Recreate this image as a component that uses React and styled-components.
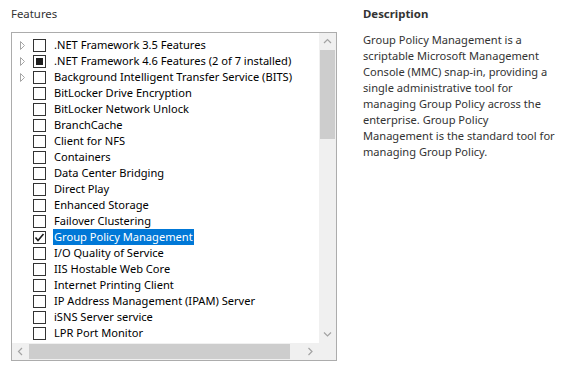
import React from "react";
import styled, { createGlobalStyle } from "styled-components";

const GlobalStyle = createGlobalStyle`
	html, body {
		margin: 0;
		padding: 0;
		background: #ffffff;
	}
	body {
		font-family: "Noto Sans", "Open Sans", sans-serif;
		font-size: 11.1px;
		color: #1a1a1a;
	}
`;

const Page = styled.div`
	display: flex;
	gap: 26px;
	padding: 6px 0 0 11px;
	width: 569px;
	height: 368px;
	box-sizing: border-box;
`;

const Column = styled.div`
	display: flex;
	flex-direction: column;
	width: ${(p) => p.width}px;
`;

const Heading = styled.div`
	height: 16px;
	line-height: 16px;
	font-size: 11.4px;
	font-weight: ${(p) => (p.bold ? 700 : 400)};
	color: #333333;
	margin-bottom: ${(p) => p.gap}px;
`;

const ListBox = styled.div`
	display: grid;
	grid-template-columns: 1fr 17px;
	grid-template-rows: 1fr 17px;
	width: 326px;
	height: 329px;
	box-sizing: border-box;
	border: 1px solid #acacac;
`;

const Viewport = styled.div`
	overflow: hidden;
	padding-top: 4px;
`;

const Row = styled.div`
	display: flex;
	align-items: center;
	height: 16px;
	padding-left: 8px;
	white-space: nowrap;
`;

const Expander = styled.span`
	display: flex;
	align-items: center;
	width: 13px;
	height: 16px;
	flex: none;
`;

const Box = styled.span`
	display: flex;
	align-items: center;
	justify-content: center;
	width: 13px;
	height: 13px;
	box-sizing: border-box;
	border: 1px solid #333333;
	flex: none;
	margin-right: 7px;
`;

const Partial = styled.span`
	width: 7px;
	height: 7px;
	background: #1e1e1e;
`;

const Label = styled.span`
	padding: 0 1px;
	line-height: 16px;
	color: ${(p) => (p.selected ? "#ffffff" : "#000000")};
	background: ${(p) => (p.selected ? "#0078d7" : "transparent")};
`;

const VScroll = styled.div`
	display: flex;
	flex-direction: column;
	background: #f0f0f0;
`;

const HScroll = styled.div`
	display: flex;
	background: #f0f0f0;
`;

const Arrow = styled.span`
	display: flex;
	align-items: center;
	justify-content: center;
	width: 17px;
	height: 17px;
	flex: none;
`;

const VThumb = styled.div`
	height: 89px;
	margin: 0 1px;
	background: #cdcdcd;
`;

const HThumb = styled.div`
	width: 261px;
	margin: 1px 0;
	background: #cdcdcd;
`;

const Spacer = styled.div`
	flex: 1;
`;

const Corner = styled.div`
	background: #f0f0f0;
`;

const Paragraph = styled.div`
	color: #333333;
	line-height: 16px;
	margin-top: 2px;
`;

const Line = styled.div`
	white-space: nowrap;
`;

const features = [
	{ name: ".NET Framework 3.5 Features", expand: true },
	{ name: ".NET Framework 4.6 Features (2 of 7 installed)", expand: true, state: "partial" },
	{ name: "Background Intelligent Transfer Service (BITS)", expand: true },
	{ name: "BitLocker Drive Encryption" },
	{ name: "BitLocker Network Unlock" },
	{ name: "BranchCache" },
	{ name: "Client for NFS" },
	{ name: "Containers" },
	{ name: "Data Center Bridging" },
	{ name: "Direct Play" },
	{ name: "Enhanced Storage" },
	{ name: "Failover Clustering" },
	{ name: "Group Policy Management", state: "checked", selected: true },
	{ name: "I/O Quality of Service" },
	{ name: "IIS Hostable Web Core" },
	{ name: "Internet Printing Client" },
	{ name: "IP Address Management (IPAM) Server" },
	{ name: "iSNS Server service" },
	{ name: "LPR Port Monitor" },
];

const description = [
	"Group Policy Management is a",
	"scriptable Microsoft Management",
	"Console (MMC) snap-in, providing a",
	"single administrative tool for",
	"managing Group Policy across the",
	"enterprise. Group Policy",
	"Management is the standard tool for",
	"managing Group Policy.",
];

const Triangle = () => (
	<svg width="5" height="9" viewBox="0 0 5 9">
		<path d="M0.5 0.5 L4.5 4.5 L0.5 8.5 Z" fill="none" stroke="#a6a6a6" strokeWidth="1" />
	</svg>
);

const Check = () => (
	<svg width="11" height="11" viewBox="0 0 11 11">
		<polyline points="1.5,5.5 4,8.5 9.5,2" fill="none" stroke="#1a1a1a" strokeWidth="1.6" />
	</svg>
);

const Chevron = ({ dir }) => {
	const pts = {
		up: "1,5 4.5,1.5 8,5",
		down: "1,1.5 4.5,5 8,1.5",
		left: "5,1 1.5,4.5 5,8",
		right: "1.5,1 5,4.5 1.5,8",
	}[dir];
	const vertical = dir === "up" || dir === "down";
	return (
		<svg width={vertical ? 9 : 7} height={vertical ? 7 : 9} viewBox={vertical ? "0 0 9 7" : "0 0 7 9"}>
			<polyline points={pts} fill="none" stroke="#a3a3a3" strokeWidth="1.2" />
		</svg>
	);
};

const App = () => {
	return (
		<>
			<GlobalStyle />
			<Page>
				<Column width={326}>
					<Heading gap={10}>Features</Heading>
					<ListBox>
						<Viewport>
							{features.map((f) => (
								<Row key={f.name}>
									<Expander>{f.expand && <Triangle />}</Expander>
									<Box>
										{f.state === "partial" && <Partial />}
										{f.state === "checked" && <Check />}
									</Box>
									<Label selected={f.selected}>{f.name}</Label>
								</Row>
							))}
						</Viewport>
						<VScroll>
							<Arrow>
								<Chevron dir="up" />
							</Arrow>
							<VThumb />
							<Spacer />
							<Arrow>
								<Chevron dir="down" />
							</Arrow>
						</VScroll>
						<HScroll>
							<Arrow>
								<Chevron dir="left" />
							</Arrow>
							<HThumb />
							<Spacer />
							<Arrow>
								<Chevron dir="right" />
							</Arrow>
						</HScroll>
						<Corner />
					</ListBox>
				</Column>
				<Column width={210}>
					<Heading bold gap={8}>Description</Heading>
					<Paragraph>
						{description.map((l) => (
							<Line key={l}>{l}</Line>
						))}
					</Paragraph>
				</Column>
			</Page>
		</>
	);
};

export default App;
